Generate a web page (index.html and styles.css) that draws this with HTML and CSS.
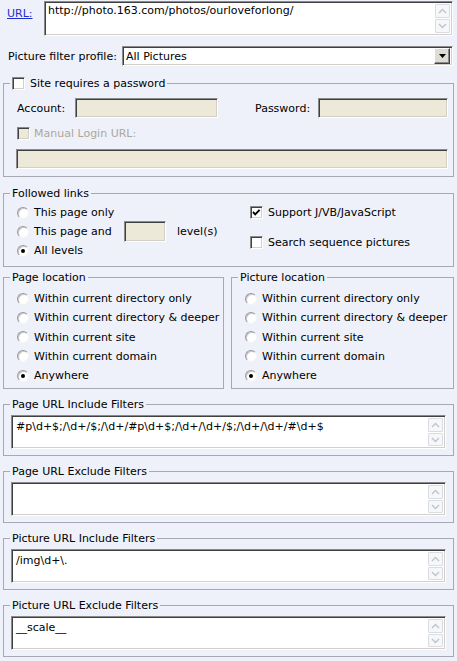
FILE: index.html
```html
<!DOCTYPE html>
<html>
<head>
<meta charset="utf-8">
<title>Download settings</title>
<link rel="stylesheet" href="styles.css">
</head>
<body>
<div class="page">

  <div class="url-row">
    <a class="url-link" href="#">URL:</a>
    <div class="box url-box">
      <div class="box-text">http://photo.163.com/photos/ourloveforlong/</div>
      <div class="vscroll">
        <span class="sbtn"><svg width="9" height="6" viewBox="0 0 9 6"><polyline points="1,5 4.5,1.5 8,5" /></svg></span>
        <span class="sbtn"><svg width="9" height="6" viewBox="0 0 9 6"><polyline points="1,1 4.5,4.5 8,1" /></svg></span>
      </div>
    </div>
  </div>

  <div class="profile-row">
    <span class="profile-label">Picture filter profile:</span>
    <div class="select">
      <span class="select-text">All Pictures</span>
      <span class="select-btn"><svg width="7" height="4" viewBox="0 0 7 4"><polygon points="0,0 7,0 3.5,4" /></svg></span>
    </div>
  </div>

  <fieldset class="group pw-group">
    <legend class="legend"><span class="legend-check"><span class="check"></span>Site requires a password</span></legend>
    <div class="pw-inner">
      <div class="acct-row">
        <span class="acct-label">Account:</span>
        <span class="input disabled acct-input"></span>
        <span class="pass-label">Password:</span>
        <span class="input disabled pass-input"></span>
      </div>
      <div class="manual-row">
        <span class="check check-disabled"></span>
        <span class="text-disabled">Manual Login URL:</span>
      </div>
      <span class="input disabled login-input"></span>
    </div>
  </fieldset>

  <fieldset class="group follow-group">
    <legend class="legend">Followed links</legend>
    <div class="follow-inner">
      <div class="follow-left">
        <div class="opt"><span class="radio"></span><span>This page only</span></div>
        <div class="opt"><span class="radio"></span><span class="and-label">This page and</span><span class="input disabled level-input"></span><span class="levels">level(s)</span></div>
        <div class="opt"><span class="radio on"></span><span>All levels</span></div>
      </div>
      <div class="follow-right">
        <div class="opt"><span class="check"><svg width="11" height="11" viewBox="0 0 11 11"><polyline points="2,5 4.2,7.4 8.6,2.8" /></svg></span><span>Support J/VB/JavaScript</span></div>
        <div class="opt opt-gap"><span class="check"></span><span>Search sequence pictures</span></div>
      </div>
    </div>
  </fieldset>

  <div class="loc-grid">
    <fieldset class="group">
      <legend class="legend">Page location</legend>
      <div class="loc-inner">
        <div class="opt loc-opt"><span class="radio"></span><span>Within current directory only</span></div>
        <div class="opt loc-opt"><span class="radio"></span><span>Within current directory &amp; deeper</span></div>
        <div class="opt loc-opt"><span class="radio"></span><span>Within current site</span></div>
        <div class="opt loc-opt"><span class="radio"></span><span>Within current domain</span></div>
        <div class="opt loc-opt"><span class="radio on"></span><span>Anywhere</span></div>
      </div>
    </fieldset>
    <fieldset class="group">
      <legend class="legend">Picture location</legend>
      <div class="loc-inner">
        <div class="opt loc-opt"><span class="radio"></span><span>Within current directory only</span></div>
        <div class="opt loc-opt"><span class="radio"></span><span>Within current directory &amp; deeper</span></div>
        <div class="opt loc-opt"><span class="radio"></span><span>Within current site</span></div>
        <div class="opt loc-opt"><span class="radio"></span><span>Within current domain</span></div>
        <div class="opt loc-opt"><span class="radio on"></span><span>Anywhere</span></div>
      </div>
    </fieldset>
  </div>

  <fieldset class="group filter-group">
    <legend class="legend">Page URL Include Filters</legend>
    <div class="filter-inner">
      <div class="box filter-box">
        <div class="box-text filter-text">#p\d+$;/\d+/$;/\d+/#p\d+$;/\d+/\d+/$;/\d+/\d+/#\d+$</div>
        <div class="vscroll">
          <span class="sbtn"><svg width="9" height="6" viewBox="0 0 9 6"><polyline points="1,5 4.5,1.5 8,5" /></svg></span>
          <span class="sbtn"><svg width="9" height="6" viewBox="0 0 9 6"><polyline points="1,1 4.5,4.5 8,1" /></svg></span>
        </div>
      </div>
    </div>
  </fieldset>

  <fieldset class="group filter-group">
    <legend class="legend">Page URL Exclude Filters</legend>
    <div class="filter-inner">
      <div class="box filter-box">
        <div class="box-text filter-text"></div>
        <div class="vscroll">
          <span class="sbtn"><svg width="9" height="6" viewBox="0 0 9 6"><polyline points="1,5 4.5,1.5 8,5" /></svg></span>
          <span class="sbtn"><svg width="9" height="6" viewBox="0 0 9 6"><polyline points="1,1 4.5,4.5 8,1" /></svg></span>
        </div>
      </div>
    </div>
  </fieldset>

  <fieldset class="group filter-group">
    <legend class="legend">Picture URL Include Filters</legend>
    <div class="filter-inner">
      <div class="box filter-box">
        <div class="box-text filter-text">/img\d+\.</div>
        <div class="vscroll">
          <span class="sbtn"><svg width="9" height="6" viewBox="0 0 9 6"><polyline points="1,5 4.5,1.5 8,5" /></svg></span>
          <span class="sbtn"><svg width="9" height="6" viewBox="0 0 9 6"><polyline points="1,1 4.5,4.5 8,1" /></svg></span>
        </div>
      </div>
    </div>
  </fieldset>

  <fieldset class="group filter-group">
    <legend class="legend">Picture URL Exclude Filters</legend>
    <div class="filter-inner">
      <div class="box filter-box">
        <div class="box-text filter-text">__scale__</div>
        <div class="vscroll">
          <span class="sbtn"><svg width="9" height="6" viewBox="0 0 9 6"><polyline points="1,5 4.5,1.5 8,5" /></svg></span>
          <span class="sbtn"><svg width="9" height="6" viewBox="0 0 9 6"><polyline points="1,1 4.5,4.5 8,1" /></svg></span>
        </div>
      </div>
    </div>
  </fieldset>

</div>
</body>
</html>
```
FILE: styles.css
```css
* { box-sizing: border-box; }
html, body { margin: 0; padding: 0; }
body {
  background: #eef1f9;
  font-family: "DejaVu Sans", sans-serif;
  font-size: 11px;
  line-height: 13px;
  color: #000;
  width: 457px;
  height: 661px;
  overflow: hidden;
}
.page { padding: 0 3px; }

/* sunken 3D box */
.box, .input, .select, .check {
  border: 1px solid;
  border-color: #8a8a8a #fff #fff #8a8a8a;
  box-shadow: inset 1px 1px 0 #404040, inset -1px -1px 0 #d4d0c8;
  background: #fff;
}
.box { display: flex; padding: 2px; }
.box-text { flex: 1; padding-left: 2px; white-space: nowrap; overflow: hidden; }
.vscroll { width: 15px; display: flex; flex-direction: column; gap: 1px; }
.sbtn {
  flex: 1;
  display: flex;
  align-items: center;
  justify-content: center;
  background: #f6f7f9;
  border: 1px solid #d9dce3;
  border-radius: 1px;
}
.sbtn svg polyline { fill: none; stroke: #bfc3cc; stroke-width: 1.4; }

/* URL row */
.url-row { display: flex; margin-top: 1px; height: 35px; margin-right: 1px; }
.url-link {
  width: 41px;
  padding-left: 4px;
  padding-top: 6px;
  color: #1f2fc9;
  text-decoration: underline;
}
.url-box { flex: 1; }
.url-box .box-text { padding-left: 1px; padding-top: 0; }

/* profile row */
.profile-row { display: flex; align-items: center; margin-top: 10px; margin-right: 1px; }
.profile-label { width: 119px; padding-left: 5px; }
.select { flex: 1; height: 20px; display: flex; align-items: center; padding: 2px 2px 2px 3px; }
.select-text { flex: 1; }
.select-btn {
  width: 16px;
  height: 16px;
  display: flex;
  align-items: center;
  justify-content: center;
  background: #dfdcd4;
  border: 1px solid;
  border-color: #fff #404040 #404040 #fff;
  box-shadow: inset -1px -1px 0 #8a8a8a;
}
.select-btn svg polygon { fill: #000; }

/* group boxes */
.group {
  margin: 0;
  padding: 0;
  min-width: 0;
  border: 1px solid #a6a9b1;
  border-radius: 0;
}
.legend { margin-left: 6px; padding: 0 2px; line-height: 13px; }
.legend-check { display: flex; align-items: center; gap: 5px; }

.check { display: block; width: 13px; height: 13px; flex: none; padding: 0; }
.check svg { display: block; margin: 0; }
.check svg polyline { fill: none; stroke: #000; stroke-width: 1.9; }
.check-disabled { background: #ece9d8; }
.text-disabled { color: #aca899; }

.radio {
  display: block;
  width: 12px;
  height: 12px;
  flex: none;
  border-radius: 50%;
  border: 1px solid;
  border-color: #9a9a9a #f4f4f4 #f4f4f4 #9a9a9a;
  box-shadow: inset 1px 1px 0 #c8c8c8;
  background: #fff;
  position: relative;
}
.radio.on::after {
  content: "";
  position: absolute;
  left: 3px;
  top: 3px;
  width: 4px;
  height: 4px;
  border-radius: 50%;
  background: #000;
}

.input { display: block; height: 20px; }
.disabled { background: #ece9d8; }

/* password group */
.pw-group { margin-top: 11px; }
.pw-inner { padding: 8px 5px 7px 13px; }
.acct-row { display: flex; align-items: center; }
.acct-label { width: 58px; }
.acct-input { width: 143px; }
.pass-label { width: 63px; margin-left: 37px; }
.pass-input { flex: 1; }
.manual-row { display: flex; align-items: center; gap: 4px; margin-top: 9px; }
.login-input { margin-top: 9px; margin-left: -1px; }

/* followed links */
.follow-group { margin-top: 10px; }
.follow-inner { display: flex; padding: 3px 0 6px 13px; }
.follow-left { width: 233px; }
.opt { display: flex; align-items: center; height: 19px; gap: 5px; white-space: nowrap; }
.follow-right .opt { gap: 5px; }
.opt-gap { margin-top: 11px; }
.and-label { width: 85px; }
.level-input { width: 42px; height: 21px; }
.levels { margin-left: 6px; }

/* location groups */
.loc-grid { display: grid; grid-template-columns: 221px 223px; gap: 7px; margin-top: 4px; }
.loc-inner { padding: 5px 0 3px 13px; }
.loc-opt { height: 19.25px; }

/* filters */
.filter-group { margin-top: 9px; }
.filter-inner { padding: 4px 7px 6px 7px; }
.filter-box { height: 34px; }
.filter-text { padding-top: 2px; padding-left: 2px; }
```
